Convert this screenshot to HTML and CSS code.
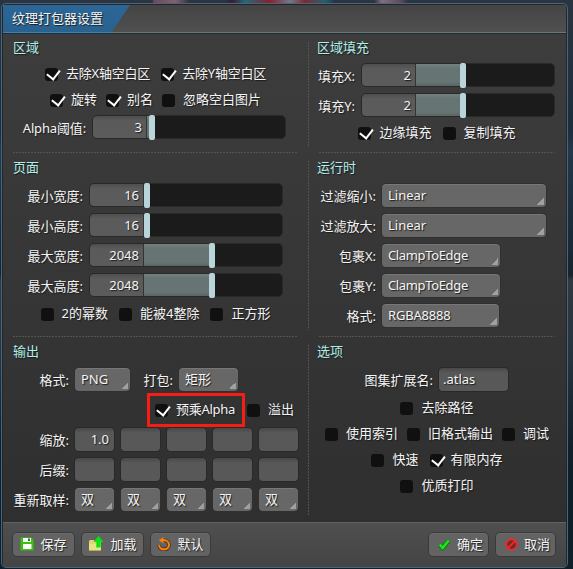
FILE: index.html
```html
<!DOCTYPE html>
<html lang="zh-CN">
<head>
<meta charset="utf-8">
<title>纹理打包器设置</title>
<link rel="stylesheet" href="styles.css">
</head>
<body>
<div class="dialog">
  <header class="titlebar"><h1 class="title"><span>纹理打包器设置</span></h1></header>
  <main class="content">
    <div class="band band-top">
      <section class="panel region">
        <h2>区域</h2>
        <div class="checks tight"><span class="check on">去除X轴空白区</span><span class="check on">去除Y轴空白区</span></div>
        <div class="checks near"><span class="check on">旋转</span><span class="check on">别名</span><span class="check">忽略空白图片</span></div>
        <div class="row alpha"><label>Alpha阈值:</label><div class="slider s-low"><b>3</b><u></u><i></i></div></div>
      </section>
      <div class="divider"></div>
      <section class="panel padding">
        <h2>区域填充</h2>
        <div class="row"><label>填充X:</label><div class="slider s-fill"><b>2</b><u></u><i></i></div></div>
        <div class="row"><label>填充Y:</label><div class="slider s-fill"><b>2</b><u></u><i></i></div></div>
        <div class="checks"><span class="check on">边缘填充</span><span class="check">复制填充</span></div>
      </section>
    </div>
    <div class="band band-mid">
      <section class="panel page">
        <h2>页面</h2>
        <div class="row"><label>最小宽度:</label><div class="slider"><b>16</b><i></i></div></div>
        <div class="row"><label>最小高度:</label><div class="slider"><b>16</b><i></i></div></div>
        <div class="row"><label>最大宽度:</label><div class="slider s-max"><b>2048</b><u></u><i></i></div></div>
        <div class="row"><label>最大高度:</label><div class="slider s-max"><b>2048</b><u></u><i></i></div></div>
        <div class="checks"><span class="check">2的幂数</span><span class="check">能被4整除</span><span class="check">正方形</span></div>
      </section>
      <div class="divider"></div>
      <section class="panel runtime">
        <h2>运行时</h2>
        <div class="row"><label>过滤缩小:</label><div class="select w164">Linear</div></div>
        <div class="row"><label>过滤放大:</label><div class="select w164">Linear</div></div>
        <div class="row"><label>包裹X:</label><div class="select w118">ClampToEdge</div></div>
        <div class="row"><label>包裹Y:</label><div class="select w118">ClampToEdge</div></div>
        <div class="row"><label>格式:</label><div class="select w117">RGBA8888</div></div>
      </section>
    </div>
    <div class="band band-low">
      <section class="panel output">
        <h2>输出</h2>
        <div class="row"><label>格式:</label><div class="select w55">PNG</div><label class="pack">打包:</label><div class="select w59">矩形</div></div>
        <div class="checks end"><span class="check on highlight">预乘Alpha</span><span class="check">溢出</span></div>
        <div class="row multi"><label>缩放:</label><div class="field num">1.0</div><div class="field"></div><div class="field"></div><div class="field"></div><div class="field"></div></div>
        <div class="row multi"><label>后缀:</label><div class="field"></div><div class="field"></div><div class="field"></div><div class="field"></div><div class="field"></div></div>
        <div class="row multi"><label>重新取样:</label><div class="select">双</div><div class="select">双</div><div class="select">双</div><div class="select">双</div><div class="select">双</div></div>
      </section>
      <div class="divider"></div>
      <section class="panel options">
        <h2>选项</h2>
        <div class="row"><label>图集扩展名:</label><div class="field ext">.atlas</div></div>
        <div class="checks"><span class="check">去除路径</span></div>
        <div class="checks near"><span class="check">使用索引</span><span class="check">旧格式输出</span><span class="check">调试</span></div>
        <div class="checks"><span class="check">快速</span><span class="check on">有限内存</span></div>
        <div class="checks"><span class="check">优质打印</span></div>
      </section>
    </div>
  </main>
  <footer class="footer">
    <button class="w63"><svg width="14" height="14" viewBox="0 0 14 14"><path d="M1 .5h10.5L13.5 3v10.500H.5V1z" fill="#36c40c"/><path d="M3 1h8v4H3zM3 7h8.500v5H3z" fill="#fff"/><path d="M8 1.500h2v2.500H8z" fill="#2a7f10"/></svg>保存</button>
    <button class="w63"><svg width="16" height="16" viewBox="0 0 16 16"><path d="M1 5l1-1h4l1 2h6v8.500H1z" fill="#e0d474"/><path d="M1 8h12v6.500H1z" fill="#e9e28c"/><path d="M1 14h12v1H1z" fill="#b8ab50"/><path d="M10.500 0l4.900 6h-2.700v5.500H8.300V6H5.600z" fill="#08e510"/></svg>加载</button>
    <button class="w61"><svg width="14" height="14" viewBox="0 0 14 14"><path d="M2 8.200a5 4.600 0 1 0 5-5H4" fill="none" stroke="#3a2a1a" stroke-width="3.600"/><path d="M2 8.200a5 4.600 0 1 0 5-5H4" fill="none" stroke="#f5820c" stroke-width="2.200"/><path d="M6.500 0v6.500L1.800 3.200z" fill="#f5820c"/></svg>默认</button>
    <span class="spacer"></span>
    <button class="w61 confirm"><svg width="13" height="13" viewBox="0 0 14 14"><path d="M2 7.500l3 3.500 6.500-8" fill="none" stroke="#127812" stroke-width="4.600"/><path d="M2 7.200l3 3.500 6.500-8" fill="none" stroke="#1be31b" stroke-width="2.800"/></svg>确定</button>
    <button class="w61 confirm"><svg width="13" height="13" viewBox="0 0 14 14"><circle cx="7" cy="7" r="5.600" fill="#682c2c" stroke="#f3262b" stroke-width="2"/><path d="M3.200 10.800l7.600-7.600" stroke="#f3262b" stroke-width="2"/></svg>取消</button>
  </footer>
</div>
</body>
</html>
```
FILE: styles.css
```css
* { box-sizing: border-box; }
body {
  margin: 0;
  height: 569px;
  overflow: hidden;
  padding: 3px 4px 0 1px;
  background:
    linear-gradient(90deg, transparent 152px, #6a4a5a 154px, #87606c 175px, transparent 190px, transparent 225px, #3a1d31 232px, #246878 245px, #8d1f2b 270px, #777784 290px, #842532 305px, #22616f 325px, transparent 335px, transparent 374px, #81707b 382px, #644a5c 400px, transparent 408px) 0 0 / 100% 3px no-repeat,
    linear-gradient(#2b3440, #1d2d3b 130px, #22384b 150px, #17242f 275px, #303840 280px, #26333e 360px, #101f29 450px, #0f202a);
  font: 13px/20px "Noto Sans", "Noto Sans CJK SC", sans-serif;
  color: #f4f4f4;
}
.dialog {
  width: 567px;
  height: 565px;
  border: 1px solid #46657e;
  border-radius: 5px;
  overflow: hidden;
  background: linear-gradient(#3d3d3d 30px, #2f2f2f 518px);
  box-shadow: inset 0 0 0 1px #242629;
  padding: 1px;
  text-shadow: 1px 1px 1px #1c1c1c;
}
.titlebar {
  height: 28px;
  background: linear-gradient(#444, #505050);
  border-bottom: 1px solid #657980;
}
.title {
  margin: 0;
  width: 127px;
  height: 28px;
  padding: 3px 0 0 9px;
  font-size: 13px;
  font-weight: 400;
  line-height: 20px;
  background: linear-gradient(#2b6698, #29628f);
  border-bottom: 1px solid #3285bf;
  clip-path: polygon(0 0, 100% 0, 108px 100%, 0 100%);
}
.content { height: 489px; border-top: 1px solid #292929; }
.band { display: grid; grid-template-columns: 284px 22px 235px; padding-left: 10px; }
.band-top { height: 119px; }
.band-mid { height: 184px; }
.band-low { height: 185px; }
.panel { padding-top: 4px; }
.band-top .panel { padding-top: 3px; }
.band-top .panel, .band-mid .panel {
  background: repeating-linear-gradient(90deg, #535353 0 2px, transparent 2px 3px) 0 100% / 100% 1px no-repeat;
}
.divider {
  width: 1px;
  margin: 8px 0 7px 11px;
  background: repeating-linear-gradient(#535353 0 2px, transparent 2px 3px);
}
h2 { margin: 0 0 3px; height: 20px; font-size: 13px; line-height: 20px; font-weight: 400; color: #b0eeea; }
.divider + .panel h2 { margin-left: -2px; }
.region h2 { margin-bottom: 4px; }
.row { display: flex; align-items: center; height: 30px; }
.row label { flex: none; display: flex; justify-content: flex-end; margin-right: 6px; padding-top: 1px; white-space: nowrap; }
.alpha { height: 28px; }
.alpha label { width: 73px; letter-spacing: -.15px; }
.padding label { width: 36px; }
.page label { width: 70px; }
.runtime label { width: 57px; }
.output label { width: 56px; }
.output .pack { width: 43px; }
.options label { width: 114px; }
.checks { display: flex; justify-content: center; align-items: center; gap: 11px; height: 26px; padding-left: 1px; }
.near { gap: 9px; }
.tight { letter-spacing: -.2px; }
.check { position: relative; flex: none; display: flex; align-items: center; height: 20px; line-height: 18px; padding-bottom: 2px; white-space: nowrap; }
.check::before { content: ""; flex: none; width: 13px; height: 13px; margin: 3px 8px 0 0; border-radius: 3px; background: #101010; }
.check.on::after {
  content: "";
  position: absolute;
  left: 4px;
  top: 3px;
  width: 6.500px;
  height: 10px;
  border: solid #fff;
  border-width: 0 2.500px 2.500px 0;
  transform: rotate(38deg);
}
.page .checks, .options .checks { padding-top: 1px; }
.end { height: 30px; justify-content: flex-end; gap: 9px; padding: 1px 3px 0 0; }
.highlight { padding: 0 3px 2px 1px; letter-spacing: -.3px; outline: 3px solid #f51d15; outline-offset: 4px; border-radius: 1px; }
.highlight.on::after { left: 5px; }
.highlight { border-radius: 0; }
.slider {
  flex: none;
  width: 194px;
  height: 24px;
  display: flex;
  border: 1px solid #292929;
  border-radius: 5px;
  background: #1b1b1b;
}
.slider b {
  width: 54px;
  padding-right: 4px;
  border-right: 1px solid #343434;
  border-radius: 4px 0 0 4px;
  background: linear-gradient(#4e4e4e, #5b5b5b 5px);
  font-weight: 400;
  text-align: right;
  line-height: 22px;
}
.slider u { background: linear-gradient(#75817e, #667573 4px, #667573 18px, #596563); }
.slider i { width: 6px; height: 25px; margin-top: -1px; border-radius: 2px; background: #b9d5da; }
.s-fill u { width: 44px; }
.s-max u { width: 65px; }
.s-low u { width: 2px; }
.select {
  height: 23px;
  padding-left: 6px;
  border-radius: 4px;
  background:
    linear-gradient(135deg, transparent 50%, #a0a0a0 50%) calc(100% - 2px) calc(100% - 2px) / 7px 7px no-repeat,
    #676767;
  box-shadow: inset 0 1px #777, 0 0 0 1px #303030;
  line-height: 22px;
  white-space: nowrap;
}
.w164 { width: 164px; }
.w118 { width: 118px; letter-spacing: -.35px; }
.w117 { width: 117px; letter-spacing: -.2px; }
.w55 { width: 55px; }
.w59 { width: 59px; }
.multi .select, .multi .field { width: 39px; margin-right: 7px; flex: none; }
.field {
  height: 23px;
  border-radius: 4px;
  background: linear-gradient(#484848, #585858 5px);
  box-shadow: 0 0 0 1px #292929;
  line-height: 22px;
}
.num { text-align: right; padding-right: 5px; }
.ext { width: 69px; padding-left: 4px; }
.footer {
  display: flex;
  align-items: center;
  height: 45px;
  gap: 6px;
  padding: 0 10px 1px 9px;
  border-top: 1px solid #626262;
  background: linear-gradient(#4f4f4f, #444);
}
.spacer { flex: 1; }
button {
  display: flex;
  align-items: center;
  justify-content: center;
  gap: 6px;
  height: 25px;
  padding: 0 0 1px;
  border: 1px solid #3a3a3a;
  border-radius: 5px;
  background: #636363;
  box-shadow: inset 0 1px #6c6c6c;
  font: inherit;
  color: inherit;
  text-shadow: inherit;
}
.confirm { padding-left: 4px; }
.w63 { width: 63px; }
.w61 { width: 61px; }
```
